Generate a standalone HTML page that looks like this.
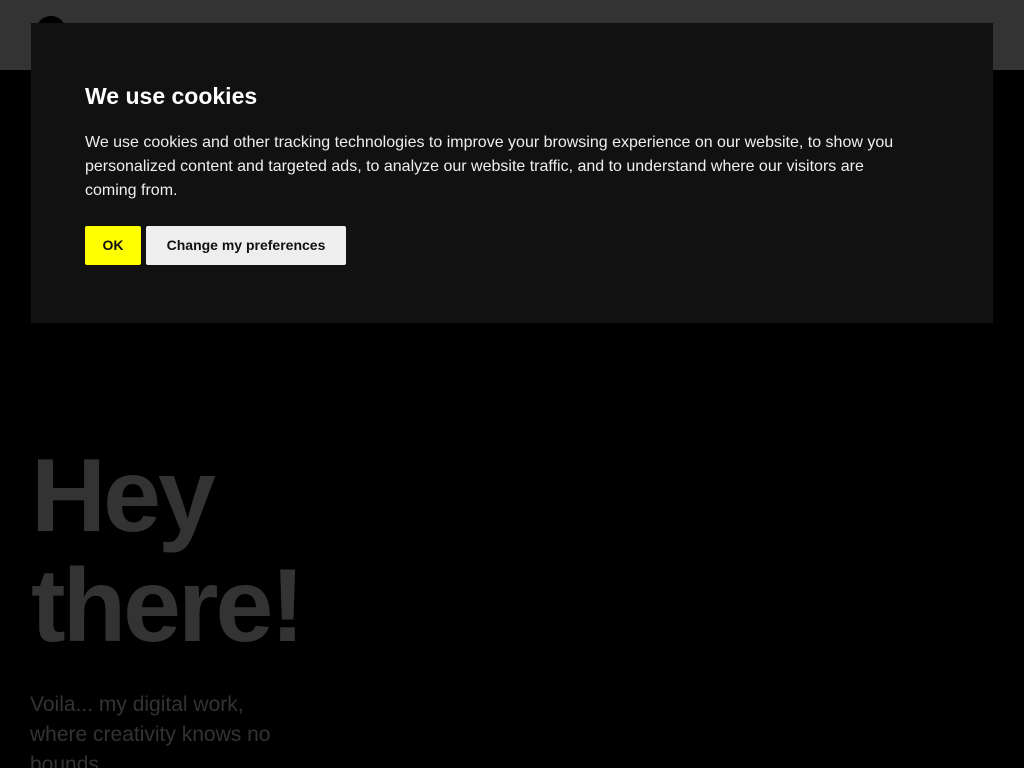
<!DOCTYPE html>
<html style="overflow:hidden;height:768px"><head><style>
body{margin:0;width:1024px;height:768px;overflow:hidden;background:#000;font-family:"Liberation Sans",sans-serif;position:relative}
.hdr{position:absolute;left:0;top:0;width:1024px;height:70px;background:#333}
.logo{position:absolute;left:36px;top:16px;width:30px;height:30px;border-radius:50%;background:#000}
h1{position:absolute;left:31px;top:441px;margin:0;font-size:104px;line-height:110px;color:#333;font-weight:bold;letter-spacing:-3px}
.sub{position:absolute;left:30px;top:690px;width:265px;font-size:21px;line-height:30px;color:#333;margin:0}
.modal{position:absolute;left:31px;top:23px;width:962px;height:300px;background:#111;color:#fff}
.modal h2{position:absolute;left:54px;top:59px;margin:0;font-size:23px;line-height:28px;font-weight:bold}
.modal p{position:absolute;left:54px;top:108px;width:815px;margin:0;font-size:16px;line-height:24px;color:#eee}
.btn{position:absolute;top:203px;height:39px;line-height:39px;font-size:14px;font-weight:bold;color:#111;text-align:center;border-radius:2px}
.ok{left:54px;width:56px;background:#ff0}
.pref{left:115px;width:200px;background:#eee}
</style></head><body>
<div class="hdr"><div class="logo"></div></div>
<h1>Hey<br>there!</h1>
<p class="sub">Voila... my digital work, where creativity knows no bounds.</p>
<div class="modal">
<h2>We use cookies</h2>
<p>We use cookies and other tracking technologies to improve your browsing experience on our website, to show you personalized content and targeted ads, to analyze our website traffic, and to understand where our visitors are coming from.</p>
<div class="btn ok">OK</div>
<div class="btn pref">Change my preferences</div>
</div>
</body></html>
